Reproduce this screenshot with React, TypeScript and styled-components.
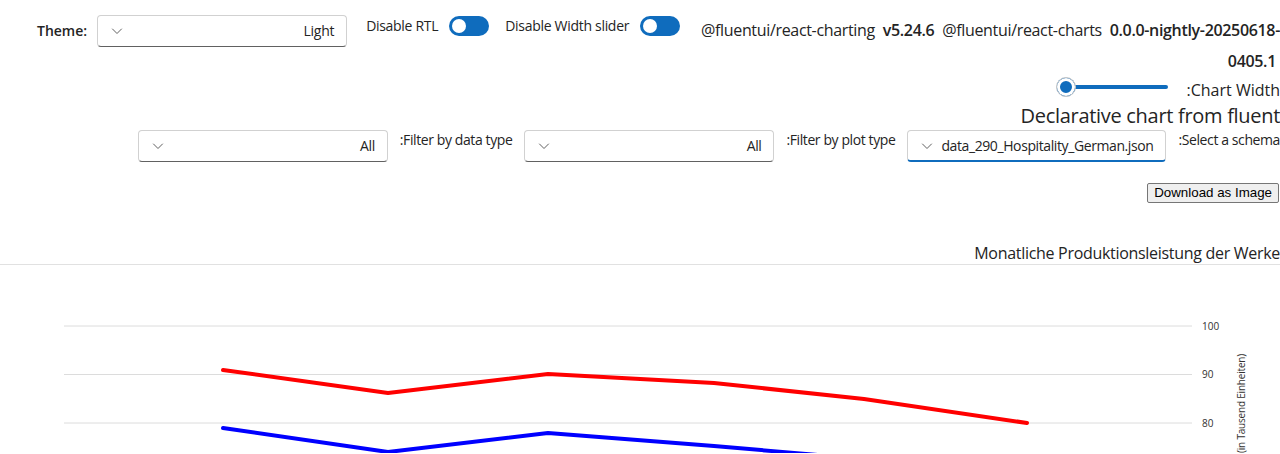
import React from 'react';
import styled, { createGlobalStyle } from 'styled-components';

const GlobalStyle = createGlobalStyle`
  html, body { margin: 0; padding: 0; background: #ffffff; overflow: hidden; }
  body {
    font-family: "Open Sans", "Noto Sans", sans-serif;
    color: #242424;
    font-size: 14px;
    letter-spacing: -0.3px;
  }
`;

const Page = styled.div`
  width: 1280px;
  display: flex;
  flex-direction: column;
  padding-top: 15px;
`;

const Header = styled.div`
  display: flex;
  flex-direction: column;
  padding-left: 37px;
`;

const TopRow = styled.div`
  display: flex;
  align-items: flex-start;
`;

const ThemeGroup = styled.div`
  display: flex;
  align-items: center;
  gap: 10px;
  margin-right: 19px;
`;

const ThemeLabel = styled.span`
  font-weight: 600;
  line-height: 20px;
  letter-spacing: 0;
`;

const SwitchGroup = styled.label`
  display: flex;
  align-items: center;
  gap: 11px;
  height: 22px;
  margin-right: 16px;
  white-space: nowrap;
  line-height: 20px;
`;

const Toggle = styled.span`
  box-sizing: border-box;
  width: 40px;
  height: 20px;
  border-radius: 10px;
  background: #0f6cbd;
  display: flex;
  align-items: center;
  padding: 0 3px;
  flex: none;
`;

const Knob = styled.span`
  width: 14px;
  height: 14px;
  border-radius: 50%;
  background: #ffffff;
`;

const Versions = styled.div`
  flex: 1;
  min-width: 0;
  text-align: right;
  font-size: 16px;
  letter-spacing: -0.33px;
  line-height: 31px;
`;

const Ver = styled.b`
  font-weight: 600;
  margin: 0 4px;
`;

const SliderRow = styled.div`
  direction: rtl;
  display: flex;
  align-items: flex-start;
  gap: 19px;
`;

const RowLabel = styled.span<{ $top?: number; $size?: number }>`
  font-size: ${(p) => p.$size ?? 14}px;
  line-height: 20px;
  padding-top: ${(p) => p.$top ?? 0}px;
  white-space: nowrap;
`;

const SliderLabel = styled(RowLabel)`
  letter-spacing: 0;
`;

const SliderBox = styled.div`
  direction: ltr;
  width: 112px;
  height: 20px;
  display: flex;
  align-items: center;
`;

const Thumb = styled.span`
  position: relative;
  z-index: 1;
  box-sizing: border-box;
  width: 20px;
  height: 20px;
  border-radius: 50%;
  background: #0f6cbd;
  border: 1px solid #c8c8c8;
  box-shadow: inset 0 0 0 3px #ffffff;
  flex: none;
`;

const Rail = styled.span`
  flex: 1;
  height: 4px;
  border-radius: 2px;
  background: #0f6cbd;
  margin-left: -10px;
`;

const Heading = styled.h2`
  margin: 2px 0 0;
  text-align: right;
  font-size: 20px;
  font-weight: 400;
  line-height: 28px;
  letter-spacing: -0.3px;
`;

const FilterRow = styled.div`
  direction: rtl;
  display: flex;
  align-items: flex-start;
  gap: 12px;
  letter-spacing: -0.4px;
`;

const DropdownBox = styled.div<{ $focused?: boolean; $width?: number }>`
  direction: ltr;
  box-sizing: border-box;
  display: flex;
  align-items: center;
  gap: 8px;
  height: 32px;
  min-width: ${(p) => p.$width ?? 250}px;
  padding: 0 12px 0 13px;
  border: 1px solid #d1d1d1;
  border-bottom: ${(p) => (p.$focused ? '2px solid #0f6cbd' : '1px solid #616161')};
  border-radius: 4px;
  background: #ffffff;
  flex: none;
`;

const DropValue = styled.span`
  margin-left: auto;
  white-space: nowrap;
  line-height: 20px;
`;

const Chevron = () => (
  <svg width="12" height="12" viewBox="0 0 12 12" fill="none">
    <path d="M1.5 4 L6 8.5 L10.5 4" stroke="#616161" strokeWidth="1" strokeLinecap="round" strokeLinejoin="round" />
  </svg>
);

const Dropdown = ({ value, focused, width }: { value: string; focused?: boolean; width?: number }) => (
  <DropdownBox $focused={focused} $width={width}>
    <Chevron />
    <DropValue>{value}</DropValue>
  </DropdownBox>
);

const DownloadRow = styled.div`
  display: flex;
  justify-content: flex-end;
  margin-top: 21px;
  padding-right: 1px;
`;

const Button = styled.button`
  font-family: "Liberation Sans", Arial, sans-serif;
  font-size: 13.33px;
  letter-spacing: 0;
  height: 20px;
  padding: 0 6px;
  border: 1px solid #767676;
  border-radius: 2px;
  background: #efefef;
  color: #000000;
  line-height: 16px;
`;

const ChartTitle = styled.div`
  margin-top: 40px;
  text-align: right;
  font-size: 16px;
  font-weight: 400;
  line-height: 20px;
  padding-bottom: 1px;
  border-bottom: 1px solid #e1e1e1;
`;

const ChartSvg = styled.svg`
  display: block;
  letter-spacing: 0;
  font-family: "Open Sans", "Noto Sans", sans-serif;
`;

const gridYs = [61, 109.5, 158];
const ticks = ['100', '90', '80'];

const red = [
  [223, 105],
  [388, 128],
  [548, 109],
  [714, 118],
  [864, 134],
  [1027, 158],
];
const blue = [
  [223, 163],
  [388, 187],
  [548, 168],
  [714, 181],
  [864, 194],
  [1027, 203],
];

const toPoints = (pts: number[][]) => pts.map((p) => p.join(',')).join(' ');

export default function App() {
  return (
    <>
      <GlobalStyle />
      <Page>
        <Header>
          <TopRow>
            <ThemeGroup>
              <ThemeLabel>Theme:</ThemeLabel>
              <Dropdown value="Light" />
            </ThemeGroup>
            <SwitchGroup>
              Disable RTL
              <Toggle>
                <Knob />
              </Toggle>
            </SwitchGroup>
            <SwitchGroup>
              Disable Width slider
              <Toggle>
                <Knob />
              </Toggle>
            </SwitchGroup>
            <Versions>
              @fluentui/react-charting <Ver>v5.24.6</Ver> @fluentui/react-charts{' '}
              <Ver>
                0.0.0-nightly-20250618-
                <wbr />
                0405.1
              </Ver>
            </Versions>
          </TopRow>
          <SliderRow>
            <SliderLabel $top={3} $size={16}>
              Chart Width:
            </SliderLabel>
            <SliderBox>
              <Thumb />
              <Rail />
            </SliderBox>
          </SliderRow>
          <Heading>Declarative chart from fluent</Heading>
          <FilterRow>
            <RowLabel>Select a schema:</RowLabel>
            <Dropdown value="data_290_Hospitality_German.json" focused />
            <RowLabel>Filter by plot type:</RowLabel>
            <Dropdown value="All" />
            <RowLabel>Filter by data type:</RowLabel>
            <Dropdown value="All" />
          </FilterRow>
          <DownloadRow>
            <Button>Download as Image</Button>
          </DownloadRow>
        </Header>
        <ChartTitle>Monatliche Produktionsleistung der Werke</ChartTitle>
        <ChartSvg width="1280" height="188" viewBox="0 0 1280 188">
          {gridYs.map((y) => (
            <line key={y} x1="64" x2="1192" y1={y} y2={y} stroke="#dcdcdc" strokeWidth="1" />
          ))}
          {gridYs.map((y, i) => (
            <text key={ticks[i]} x="1202" y={y + 3.5} fontSize="10" fill="#323130">
              {ticks[i]}
            </text>
          ))}
          <text
            transform="translate(1245, 89) rotate(-90)"
            textAnchor="end"
            fontSize="10"
            letterSpacing="-0.2"
            fill="#323130"
          >
            (in Tausend Einheiten)
          </text>
          <polyline points={toPoints(red)} fill="none" stroke="#ff0000" strokeWidth="4" strokeLinecap="round" strokeLinejoin="round" />
          <polyline points={toPoints(blue)} fill="none" stroke="#0000ff" strokeWidth="4" strokeLinecap="round" strokeLinejoin="round" />
        </ChartSvg>
      </Page>
    </>
  );
}
